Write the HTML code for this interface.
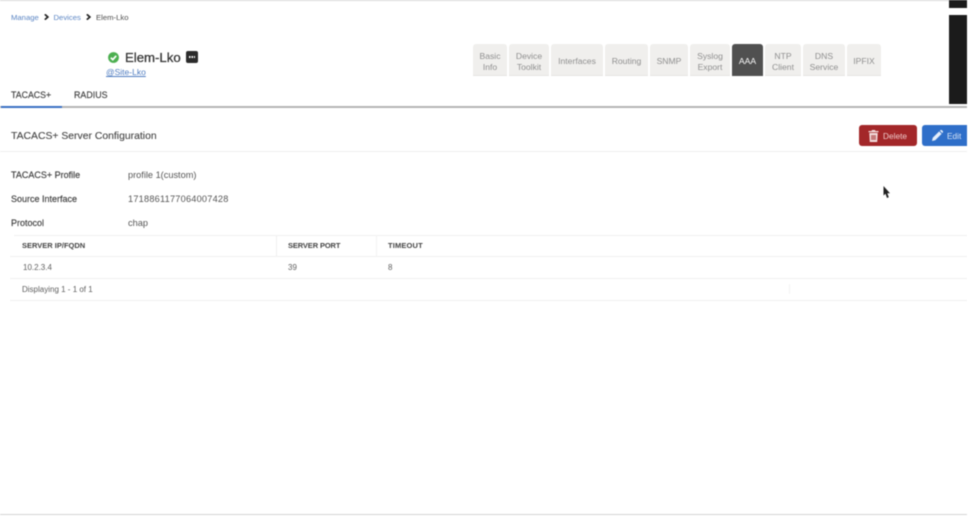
<!DOCTYPE html>
<html>
<head>
<meta charset="utf-8">
<style>
html,body{margin:0;padding:0;background:#fff}
body{width:972px;height:517px;overflow:hidden;position:relative;font-family:"Liberation Sans",sans-serif;color:#444}
#p{position:absolute;left:0;top:0;width:967px;height:517px;overflow:hidden;filter:blur(.4px)}
.a{position:absolute;white-space:nowrap}
.tab{position:absolute;top:44px;height:27px;padding-top:4px;background:#f0efed;border-radius:3px 3px 0 0;border-bottom:1px solid #e6e5e3;color:#8f8f8f;font-size:8.600px;line-height:10.500px;text-align:center;display:flex;align-items:center;justify-content:center;box-sizing:content-box}
.l{font-size:9px;color:#3c3c3c;-webkit-text-stroke:.15px #3c3c3c}
.v{font-size:9.200px;color:#555}
.th{font-size:7.500px;font-weight:bold;color:#444}
.td{font-size:8px;color:#5f5f5f}
.h{position:absolute;height:1px;background:#f0f0f0}
</style>
</head>
<body>
<div id="p">
<div class="a" style="left:0;top:0;width:967px;height:1px;background:#d8d8d8"></div>

<div class="a" style="left:11px;top:12.500px;font-size:7.700px;color:#5c86c4">Manage</div>
<svg class="a" style="left:44px;top:14px" width="5" height="6" viewBox="0 0 5 6"><path d="M.8 .3 3.800 3 .8 5.700" fill="none" stroke="#222" stroke-width="1.700"/></svg>
<div class="a" style="left:53.500px;top:12.500px;font-size:7.700px;color:#5c86c4">Devices</div>
<svg class="a" style="left:86px;top:14px" width="5" height="6" viewBox="0 0 5 6"><path d="M.8 .3 3.800 3 .8 5.700" fill="none" stroke="#222" stroke-width="1.700"/></svg>
<div class="a" style="left:96px;top:12.500px;font-size:7.700px;color:#4f4f4f">Elem-Lko</div>

<svg class="a" style="left:108px;top:52px" width="11" height="11" viewBox="0 0 11 11"><circle cx="5.500" cy="5.500" r="5.400" fill="#4caf50"/><path d="M2.800 5.700 4.800 7.600 8.200 3.800" fill="none" stroke="#fff" stroke-width="1.700"/></svg>
<div class="a" style="left:125px;top:49.500px;font-size:13.200px;color:#333;-webkit-text-stroke:.25px #333">Elem-Lko</div>
<div class="a" style="left:186px;top:51px;width:12px;height:12px;background:#2b2b2b;border-radius:2px"></div>
<div class="a" style="left:189px;top:56.300px;width:6.400px;height:1.600px;background:repeating-linear-gradient(90deg,#fff 0 1.500px,transparent 1.500px 2.400px)"></div>
<div class="a" style="left:106px;top:67px;font-size:8.500px;color:#4f7cc0;text-decoration:underline">@Site-Lko</div>

<div class="tab" style="left:473px;width:34px">Basic<br>Info</div>
<div class="tab" style="left:509px;width:40px">Device<br>Toolkit</div>
<div class="tab" style="left:551px;width:52px">Interfaces</div>
<div class="tab" style="left:605px;width:43px">Routing</div>
<div class="tab" style="left:650px;width:38px">SNMP</div>
<div class="tab" style="left:690px;width:40px">Syslog<br>Export</div>
<div class="tab" style="left:732px;width:31px;background:#505050;color:#fff;border-bottom-color:#505050">AAA</div>
<div class="tab" style="left:765px;width:36px">NTP<br>Client</div>
<div class="tab" style="left:803px;width:42px">DNS<br>Service</div>
<div class="tab" style="left:847px;width:34px">IPFIX</div>

<div class="a" style="left:949px;top:0;width:18px;height:8px;background:#1b1b1b"></div>
<div class="a" style="left:949px;top:15px;width:18px;height:89px;background:#1b1b1b"></div>

<div class="a" style="left:11px;top:89.500px;font-size:8.800px;color:#3f3f3f;-webkit-text-stroke:.15px #3f3f3f">TACACS+</div>
<div class="a" style="left:74px;top:89.500px;font-size:8.900px;color:#3f3f3f;-webkit-text-stroke:.15px #3f3f3f">RADIUS</div>
<div class="a" style="left:0;top:106px;width:967px;height:2px;background:#b5b5b5"></div>
<div class="a" style="left:1px;top:106px;width:61px;height:2px;background:#3a70c4"></div>

<div class="a" style="left:11px;top:131px;font-size:10.400px;color:#444;-webkit-text-stroke:.1px #444">TACACS+ Server Configuration</div>
<div class="h" style="left:0;top:151px;width:967px;background:#eee"></div>

<div class="a" style="left:859px;top:125px;width:58px;height:21px;background:#a32729;border-radius:3px"></div>
<svg class="a" style="left:868px;top:130px" width="11" height="12" viewBox="0 0 11 12"><path d="M4 0h3l.5 1H10.500v1.300H.5V1H3.500ZM1.300 3h8.400l-.5 9H1.800Z" fill="#f3dede"/><rect x="3" y="5" width="5" height="5" fill="#c47a7a"/></svg>
<div class="a" style="left:883px;top:130.500px;font-size:8.300px;color:#eecaca">Delete</div>
<div class="a" style="left:922px;top:125px;width:50px;height:21px;background:#2f6fc9;border-radius:3px 0 0 3px"></div>
<svg class="a" style="left:932px;top:130px" width="11" height="11" viewBox="0 0 12 12"><path d="M0 12 .8 8.500 7.800 1.500 10.500 4.200 3.500 11.200ZM8.600.7 9.300 0a1 1 0 0 1 1.300 0l1.300 1.300a1 1 0 0 1 0 1.300l-.7.8Z" fill="#e4eefa"/></svg>
<div class="a" style="left:947px;top:130.500px;font-size:8.300px;color:#d5e3f6">Edit</div>

<div class="a l" style="left:11px;top:169.500px">TACACS+ Profile</div>
<div class="a v" style="left:128px;top:170px">profile 1(custom)</div>
<div class="a l" style="left:11px;top:193.500px">Source Interface</div>
<div class="a v" style="left:128px;top:194px;letter-spacing:.22px">1718861177064007428</div>
<div class="a l" style="left:11px;top:217.500px">Protocol</div>
<div class="a v" style="left:128px;top:218px">chap</div>

<div class="h" style="left:14px;top:235px;width:953px"></div>
<div class="h" style="left:10px;top:256px;width:957px"></div>
<div class="h" style="left:10px;top:278px;width:957px"></div>
<div class="h" style="left:10px;top:300px;width:957px"></div>
<div class="a" style="left:276px;top:235px;width:1px;height:21px;background:#f0f0f0"></div>
<div class="a" style="left:376px;top:235px;width:1px;height:21px;background:#f3f3f3"></div>
<div class="a" style="left:789px;top:284px;width:1px;height:10px;background:#f3f3f3"></div>

<div class="a th" style="left:22px;top:241px">SERVER IP/FQDN</div>
<div class="a th" style="left:288px;top:241px;letter-spacing:-.12px">SERVER PORT</div>
<div class="a th" style="left:388px;top:241px;letter-spacing:.15px">TIMEOUT</div>
<div class="a td" style="left:23px;top:263px">10.2.3.4</div>
<div class="a td" style="left:288px;top:263px">39</div>
<div class="a td" style="left:388px;top:263px">8</div>
<div class="a td" style="left:22px;top:284.500px">Displaying 1 - 1 of 1</div>

<svg class="a" style="left:883px;top:186px" width="8" height="13" viewBox="0 0 8 13"><path d="M.5 0V9.500L2.500 7.800 4 12 5.800 11.300 4.300 7.300H7Z" fill="#222"/></svg>

<div class="a" style="left:0;top:514px;width:967px;height:1px;background:#d5d5d5"></div>
</div>
</body>
</html>
